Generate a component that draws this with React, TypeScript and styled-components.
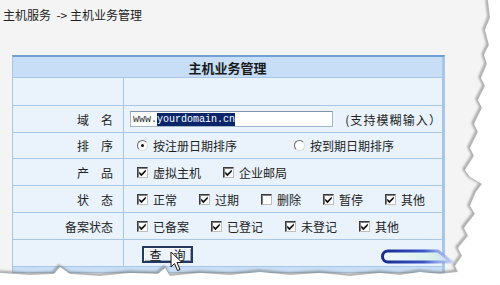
import React from "react";
import styled, { createGlobalStyle } from "styled-components";

const GlobalStyle = createGlobalStyle`
  html, body { margin: 0; padding: 0; }
  body {
    background: #f4f4f4;
    font-family: "Noto Sans CJK SC", "Noto Sans", sans-serif;
    font-size: 12px;
    color: #1e1e1e;
  }
`;

const Page = styled.div`
  position: relative;
  width: 500px;
  height: 285px;
  overflow: hidden;
  background: #f4f4f4;
`;

const Breadcrumb = styled.div`
  height: 14px;
  line-height: 14px;
  padding: 8px 0 0 3px;
  font-size: 12px;
  color: #222;
  white-space: pre;
`;

const Panel = styled.div`
  margin: 33px 0 0 12px;
  width: 431px;
  display: grid;
  grid-template-columns: 110px 318px;
  grid-template-rows: 20px 27px 26px 25px 26px 26px 26px 26px 5px;
  gap: 1px;
  background: #a8c7e6;
  border: 1px solid #a8c7e6;
  border-top: 2px solid #6f9fd4;
`;

const HeaderCell = styled.div`
  grid-column: 1 / span 2;
  background: #c7def6;
  display: flex;
  align-items: center;
  justify-content: center;
  font-weight: bold;
  font-size: 13px;
  color: #1a1a1a;
`;

const BandCell = styled.div`
  grid-column: 1 / span 2;
  background: #c7def6;
`;

const LabelCell = styled.div`
  background: #eaf3fc;
  display: flex;
  align-items: center;
  justify-content: flex-end;
  padding-right: 10px;
  color: #222;
  white-space: pre;
`;

const ValueCell = styled.div<{ $pad?: number; $gap?: number }>`
  background: #eaf3fc;
  display: flex;
  align-items: center;
  padding-left: ${(p) => p.$pad ?? 13}px;
  gap: ${(p) => p.$gap ?? 22}px;
  color: #222;
  white-space: nowrap;
`;

const Option = styled.label`
  display: inline-flex;
  align-items: center;
  gap: 5px;
  white-space: pre;
`;

const Box = styled.span`
  width: 11px;
  height: 11px;
  box-sizing: border-box;
  background: #fff;
  border: 1px solid #3a3a3a;
  border-right-color: #bdbdbd;
  border-bottom-color: #bdbdbd;
  box-shadow: inset 1px 1px 0 #808080;
  display: inline-flex;
  align-items: center;
  justify-content: center;
`;

const Radio = styled.span<{ $on?: boolean }>`
  width: 11px;
  height: 11px;
  box-sizing: border-box;
  border-radius: 50%;
  background: #fff;
  border: 1px solid #6a6a6a;
  border-right-color: #dcdcdc;
  border-bottom-color: #dcdcdc;
  display: inline-flex;
  align-items: center;
  justify-content: center;
  &::after {
    content: "";
    width: 3px;
    height: 3px;
    border-radius: 50%;
    background: ${(p) => (p.$on ? "#111" : "transparent")};
  }
`;

const Field = styled.div`
  width: 216px;
  height: 16px;
  box-sizing: border-box;
  background: #fff;
  border: 1px solid #9fb6cc;
  border-top-color: #7d93a8;
  display: flex;
  align-items: center;
  padding-left: 2px;
  font-family: "Liberation Mono", "DejaVu Sans Mono", monospace;
  font-size: 10px;
  color: #333;
`;

const Selected = styled.span`
  background: #0a246a;
  color: #fff;
  line-height: 13px;
`;

const Hint = styled.span`
  margin-left: 12px;
  letter-spacing: 1.1px;
  color: #222;
`;

const Button = styled.div`
  margin-top: 3px;
  width: 51px;
  height: 17px;
  box-sizing: border-box;
  border: 2px solid #223a62;
  background: #eef3f9;
  box-shadow: inset 1px 1px 0 #fff, inset -1px -1px 0 #9aa8ba;
  display: flex;
  align-items: center;
  justify-content: center;
  white-space: pre;
  font-size: 12px;
  color: #111;
`;

const Overlay = styled.svg`
  position: absolute;
  left: 0;
  top: 0;
  pointer-events: none;
`;

const Cursor = styled.svg`
  position: absolute;
  left: 170px;
  top: 251px;
  pointer-events: none;
`;

const Check = () => (
  <svg width="9" height="9" viewBox="0 0 9 9">
    <path d="M1.2 3.6 L3.4 5.8 L7.8 1.4 L7.8 3.8 L3.4 8.2 L1.2 6 Z" fill="#111" />
  </svg>
);

const CheckOpt = ({ label, on = true }: { label: string; on?: boolean }) => (
  <Option>
    <Box>{on && <Check />}</Box>
    {label}
  </Option>
);

const RadioOpt = ({ label, on = false }: { label: string; on?: boolean }) => (
  <Option>
    <Radio $on={on} />
    {label}
  </Option>
);

const rightEdge =
  "488,0 490,18 485,30 489,45 484,55 487,64 481,78 485,86 478,100 482,108 474,124 478,132 470,148 474,156 465,170 470,177 482,184 476,192 470,206 475,214 464,228 468,236 458,248 462,256 455,266 458,272";
const bottomEdge =
  "458,272 440,274 420,272 400,275 380,273 350,276 320,273 290,275 260,272 230,275 200,273 170,276 165,268 158,274 130,273 100,276 70,274 60,267 54,274 30,275 0,273";

export default function App() {
  return (
    <Page>
      <GlobalStyle />
      <Breadcrumb>{"主机服务  -> 主机业务管理"}</Breadcrumb>
      <Panel>
        <HeaderCell>主机业务管理</HeaderCell>

        <LabelCell />
        <ValueCell />

        <LabelCell>域　名</LabelCell>
        <ValueCell $pad={6} $gap={0}>
          <Field>
            www.<Selected>yourdomain.cn</Selected>
          </Field>
          <Hint>(支持模糊输入）</Hint>
        </ValueCell>

        <LabelCell>排　序</LabelCell>
        <ValueCell $gap={57}>
          <RadioOpt label="按注册日期排序" on />
          <RadioOpt label="按到期日期排序" />
        </ValueCell>

        <LabelCell>产　品</LabelCell>
        <ValueCell>
          <CheckOpt label="虚拟主机" />
          <CheckOpt label="企业邮局" />
        </ValueCell>

        <LabelCell>状　态</LabelCell>
        <ValueCell>
          <CheckOpt label="正常" />
          <CheckOpt label="过期" />
          <CheckOpt label="删除" on={false} />
          <CheckOpt label="暂停" />
          <CheckOpt label="其他" />
        </ValueCell>

        <LabelCell>备案状态</LabelCell>
        <ValueCell>
          <CheckOpt label="已备案" />
          <CheckOpt label="已登记" />
          <CheckOpt label="未登记" />
          <CheckOpt label="其他" />
        </ValueCell>

        <LabelCell />
        <ValueCell $pad={18}>
          <Button>查　询</Button>
        </ValueCell>

        <BandCell />
      </Panel>

      <Overlay width="500" height="285" viewBox="0 0 500 285">
        <defs>
          <filter id="soft" x="-10%" y="-10%" width="120%" height="120%">
            <feGaussianBlur stdDeviation="1.2" />
          </filter>
          <linearGradient id="pill" x1="0" y1="0" x2="1" y2="0">
            <stop offset="0" stopColor="#142c8e" />
            <stop offset="0.6" stopColor="#3b55c8" />
            <stop offset="1" stopColor="#9fb0f4" stopOpacity="0.4" />
          </linearGradient>
          <linearGradient id="pillFill" x1="0" y1="0" x2="1" y2="0">
            <stop offset="0" stopColor="#f2f8ff" />
            <stop offset="0.7" stopColor="#d9f2e9" />
            <stop offset="1" stopColor="#c9d6f5" />
          </linearGradient>
        </defs>
        <polyline
          points={`${rightEdge} ${bottomEdge.split(" ").slice(1).join(" ")}`}
          fill="none"
          stroke="#7a7a7a"
          strokeWidth="3"
          opacity="0.65"
          filter="url(#soft)"
          transform="translate(-1,-1)"
        />
        <polygon points={`${rightEdge} 500,285 500,0`} fill="#ffffff" />
        <polygon points={`${bottomEdge} 0,285 500,285 458,272`} fill="#ffffff" />
        <path
          d="M388 251 H438 L452 262 H388 A5.5 5.5 0 0 1 388 251 Z"
          fill="url(#pillFill)"
          stroke="url(#pill)"
          strokeWidth="3"
        />
      </Overlay>

      <Cursor width="14" height="22" viewBox="0 0 14 22">
        <path
          d="M1 1 L1 16 L4.5 12.5 L7.5 19.5 L10 18.5 L7 11.5 L12 11.5 Z"
          fill="#fff"
          stroke="#111"
          strokeWidth="1"
          strokeLinejoin="round"
        />
      </Cursor>
    </Page>
  );
}
